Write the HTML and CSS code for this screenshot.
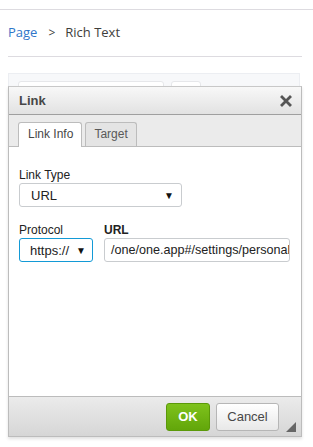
FILE: index.html
```html
<!DOCTYPE html>
<html lang="en">
<head>
  <meta charset="UTF-8">
  <meta name="viewport" content="width=device-width, initial-scale=1.0">
  <title>Rich Text - Link</title>
  <link rel="stylesheet" href="styles.css">
</head>
<body>
  <div class="topbar"></div>

  <div class="crumbs">
    <a class="crumb-link" href="#">Page</a>
    <span class="crumb-sep">&gt;</span>
    <span class="crumb-current">Rich Text</span>
  </div>

  <div class="editor">
    <div class="toolbar">
      <span class="tool tool-wide"></span>
      <span class="tool tool-small"></span>
    </div>
  </div>

  <div class="dialog">
    <div class="dialog-title">
      <span>Link</span>
      <svg class="close" width="12" height="12" viewBox="0 0 12 12">
        <path d="M2 2 L10 10 M10 2 L2 10" stroke="#555" stroke-width="2.8" stroke-linecap="square"/>
      </svg>
    </div>

    <div class="tabs">
      <span class="tab tab-active">Link Info</span>
      <span class="tab">Target</span>
    </div>

    <div class="dialog-body">
      <div class="field">
        <label>Link Type</label>
        <div class="select select-type">
          <span>URL</span>
          <span class="arrow">&#9660;</span>
        </div>
      </div>

      <div class="row">
        <div class="field">
          <label>Protocol</label>
          <div class="select select-protocol">
            <span>https://</span>
            <span class="arrow">&#9660;</span>
          </div>
        </div>
        <div class="field field-url">
          <label class="bold">URL</label>
          <div class="input">/one/one.app#/settings/personal/</div>
        </div>
      </div>
    </div>

    <div class="dialog-footer">
      <button class="btn btn-ok">OK</button>
      <button class="btn btn-cancel">Cancel</button>
      <span class="resize"></span>
    </div>
  </div>
</body>
</html>
```

FILE: styles.css
```css
body {
  margin: 0;
  font-family: "Open Sans", "Liberation Sans", sans-serif;
  background: #fff;
}
.topbar {
  height: 9px;
  border-bottom: 1px solid #dddbe0;
}
.crumbs {
  margin: 0 11px 0 8px;
  padding: 13px 0 14px;
  border-bottom: 1px solid #dddbe0;
  font-size: 13px;
  line-height: 19px;
  display: flex;
}
.crumb-link {
  color: #2f76c9;
  text-decoration: none;
}
.crumb-sep {
  color: #3e3e3c;
  margin: 0 10px 0 11px;
  font-size: 12px;
}
.crumb-current {
  color: #3e3e3c;
}
.editor {
  margin: 16px 13px 0 8px;
}
.toolbar {
  height: 20px;
  background: #f7f8fa;
  border: 1px solid #eceef2;
  border-bottom: none;
  display: flex;
  gap: 7px;
  padding: 7px 0 0 9px;
  box-sizing: border-box;
}
.tool {
  height: 14px;
  background: #fff;
  border: 1px solid #e6e7ea;
  border-radius: 3px;
}
.tool-wide { width: 144px; }
.tool-small { width: 28px; }

.dialog {
  position: absolute;
  left: 8px;
  top: 86px;
  width: 294px;
  height: 351px;
  box-sizing: border-box;
  border: 1px solid #bcbcbc;
  border-top-color: #c8c8c8;
  background: #fff;
  font-family: "Liberation Sans", Arial, sans-serif;
  display: flex;
  flex-direction: column;
  box-shadow: 0 2px 3px rgba(0, 0, 0, 0.12);
}
.dialog-title {
  height: 27px;
  flex: none;
  display: flex;
  align-items: center;
  justify-content: space-between;
  padding: 0 9px 0 10px;
  background: linear-gradient(#f8f8f8, #e2e2e2);
  border-bottom: 1px solid #9f9f9f;
  font-size: 13px;
  font-weight: bold;
  color: #474747;
}
.close {
  display: block;
}
.tabs {
  height: 31px;
  flex: none;
  background: #ebebeb;
  border-bottom: 1px solid #bcbcbc;
  display: flex;
  align-items: flex-end;
  gap: 3px;
  padding-left: 9px;
}
.tab {
  height: 23px;
  line-height: 23px;
  padding: 0 8px;
  font-size: 12px;
  color: #595959;
  background: #e4e4e4;
  border: 1px solid #bcbcbc;
  border-bottom: none;
  border-radius: 3px 3px 0 0;
}
.tab-active {
  background: #fff;
  color: #474747;
  height: 24px;
  margin-bottom: -1px;
  padding: 0 8px 0 9px;
}
.dialog-body {
  flex: 1;
  padding: 21px 10px 0 10px;
  font-size: 12px;
  color: #222;
}
.field label {
  display: block;
  font-size: 12px;
  line-height: 14px;
  margin-bottom: 1px;
  color: #222;
}
.field label.bold {
  font-weight: bold;
}
.select {
  height: 24px;
  box-sizing: border-box;
  border: 1px solid #c9cccf;
  border-radius: 3px;
  display: flex;
  align-items: center;
  justify-content: space-between;
  padding: 0 7px 0 11px;
  font-size: 13px;
  color: #222;
  background: #fff;
}
.select-type {
  width: 163px;
}
.select-protocol {
  width: 74px;
  border-color: #139ad6;
  padding-left: 10px;
  padding-right: 6px;
}
.arrow {
  font-size: 10px;
  color: #111;
}
.row {
  display: flex;
  gap: 11px;
  margin-top: 16px;
}
.field-url {
  width: 186px;
}
.input {
  height: 24px;
  box-sizing: border-box;
  border: 1px solid #c9cccf;
  border-radius: 3px;
  padding: 0 0 0 6px;
  font-size: 12.6px;
  line-height: 22px;
  color: #222;
  white-space: nowrap;
  overflow: hidden;
}
.dialog-footer {
  height: 39px;
  flex: none;
  border-top: 1px solid #bcbcbc;
  background: linear-gradient(#ebebeb, #d6d6d6);
  display: flex;
  align-items: center;
  justify-content: flex-end;
  gap: 6px;
  padding-right: 22px;
  position: relative;
}
.btn {
  height: 28px;
  border-radius: 3px;
  font-family: "Liberation Sans", Arial, sans-serif;
  font-size: 13px;
  padding: 0;
  cursor: pointer;
}
.btn-ok {
  width: 44px;
  background: linear-gradient(#7ec21c, #62a60a);
  border: 1px solid #5b9909;
  color: #fff;
  font-weight: bold;
}
.btn-cancel {
  width: 63px;
  background: linear-gradient(#fff, #e8e8e8);
  border: 1px solid #b6b6b6;
  color: #474747;
}
.resize {
  position: absolute;
  right: 5px;
  bottom: 4px;
  width: 0;
  height: 0;
  border-left: 10px solid transparent;
  border-bottom: 10px solid #666;
}
```
